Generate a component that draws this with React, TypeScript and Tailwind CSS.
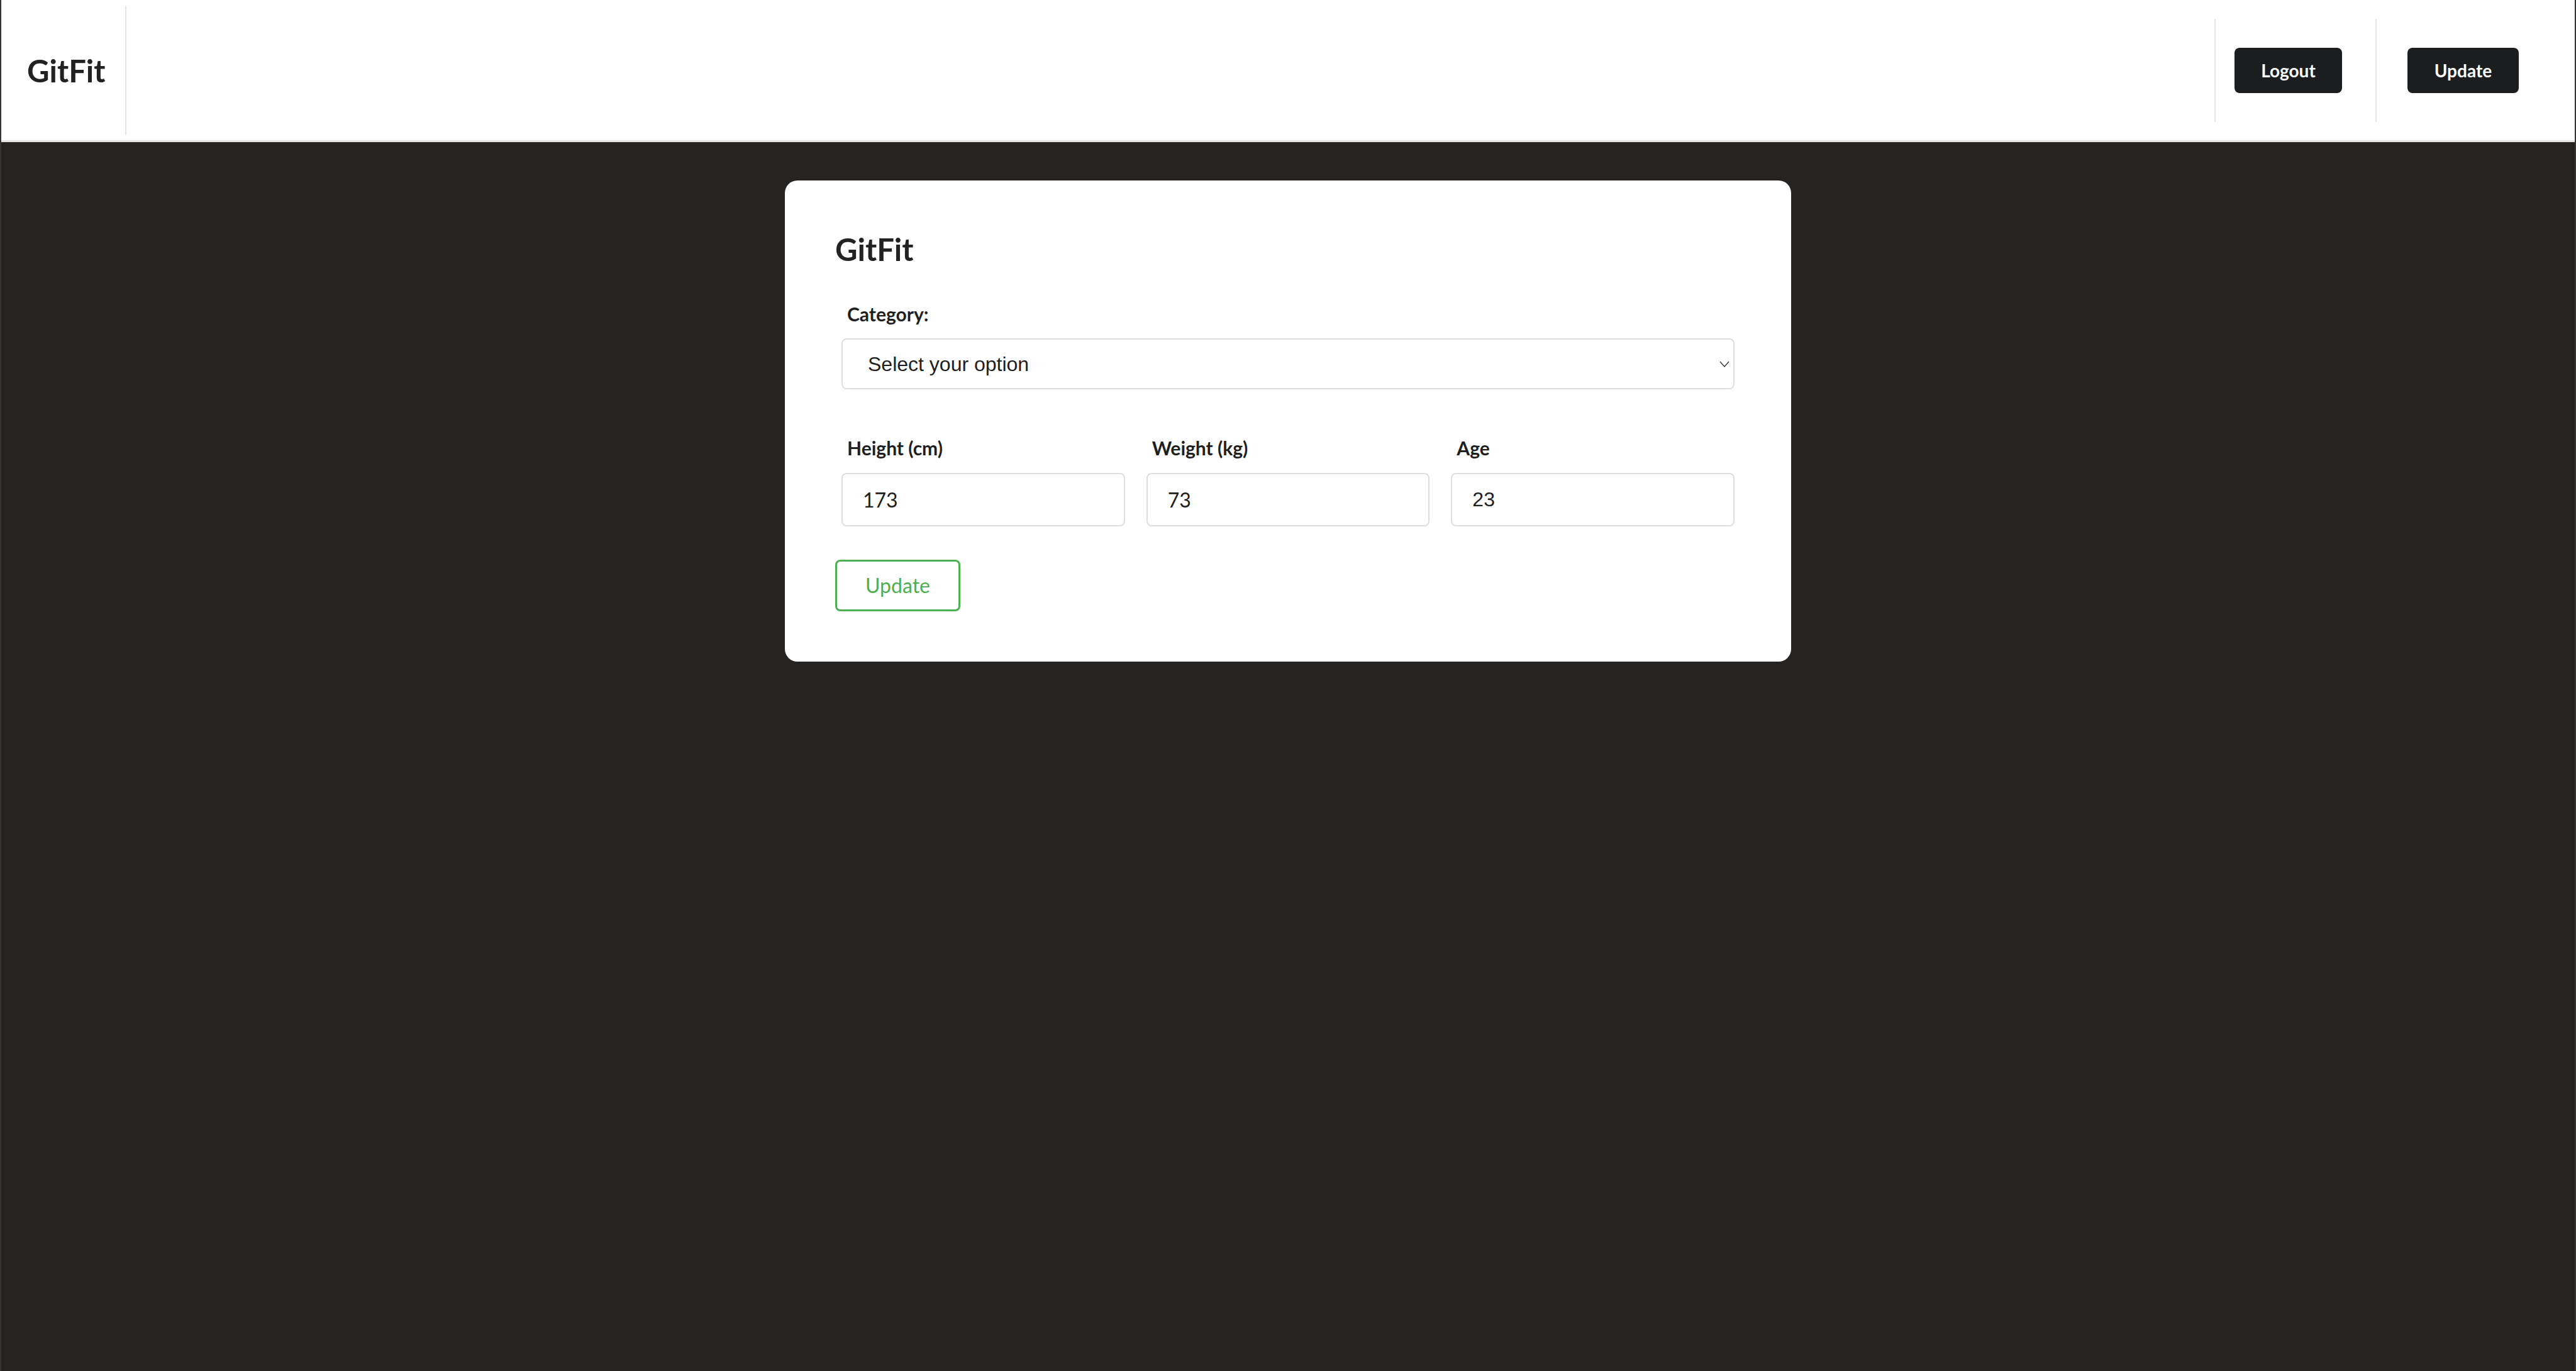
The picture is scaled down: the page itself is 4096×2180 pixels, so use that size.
import React from "react";

function Chevron() {
  return (
    <svg
      className="pointer-events-none absolute right-[8px] top-1/2 -translate-y-1/2"
      width="16"
      height="10"
      viewBox="0 0 16 10"
      fill="none"
    >
      <path d="M1 1 L8 9 L15 1" stroke="#333333" strokeWidth="1.4" />
    </svg>
  );
}

export default function App() {
  return (
    <div className="min-h-[2180px] w-full bg-[#252422] border-x-2 border-[#80808030] [font-family:Lato,sans-serif] text-[#1f1f1f]">
      {/* Header */}
      <header className="flex h-[226px] items-center bg-white border-b-[3px] border-[#e4e4e4]">
        <div className="flex h-[204px] w-[199px] items-center border-r-2 border-[#e6e6e6] pl-[41px]">
          <span className="text-[49px] font-bold leading-[58px] text-[#222222]">GitFit</span>
        </div>
        <div className="flex-1" />
        <div className="flex items-center pr-[89px]">
          <div className="h-[164px] w-[2px] bg-[#e6e6e6]" />
          <button className="ml-[30px] flex h-[72px] w-[171px] items-center justify-center rounded-[8px] bg-[#1c1d1f] text-[28px] font-bold leading-none text-white">
            Logout
          </button>
          <div className="ml-[53px] h-[164px] w-[2px] bg-[#e6e6e6]" />
          <button className="ml-[49px] flex h-[72px] w-[177px] items-center justify-center rounded-[8px] bg-[#1c1d1f] text-[28px] font-bold leading-none text-white">
            Update
          </button>
        </div>
      </header>

      {/* Card */}
      <main className="flex justify-center pt-[61px]">
        <div className="w-[1600px] rounded-[20px] bg-white px-[80px] pt-[80px] pb-[80px]">
          <h1 className="text-[49px] font-bold leading-[58px] text-[#222222]">GitFit</h1>

          <div className="mx-[10px] mt-[56px]">
            <label className="block pl-[9px] text-[30px] font-bold leading-[36px] text-[#1f1f1f]">
              Category:
            </label>
            <div className="relative mt-[21px]">
              <select
                defaultValue=""
                className="h-[81px] w-full appearance-none rounded-[8px] border-2 border-[#dedede] bg-white pl-[40px] text-[32px] text-[#1f1f1f] [font-family:'Liberation_Sans',Arial,sans-serif] outline-none"
              >
                <option value="">Select your option</option>
                <option value="bulk">Bulk</option>
                <option value="cut">Cut</option>
                <option value="maintain">Maintain</option>
              </select>
              <Chevron />
            </div>
          </div>

          <div className="mx-[10px] mt-[75px] grid grid-cols-3 gap-x-[34px]">
            <div>
              <label className="block pl-[9px] text-[30px] font-bold leading-[36px]">Height (cm)</label>
              <input
                defaultValue="173"
                className="mt-[22px] block h-[85px] w-full rounded-[8px] border-2 border-[#dedede] bg-white pl-[32px] text-[32px] text-[#1f1f1f] [font-family:Lato,sans-serif] outline-none"
              />
            </div>
            <div>
              <label className="block pl-[9px] text-[30px] font-bold leading-[36px]">Weight (kg)</label>
              <input
                defaultValue="73"
                className="mt-[22px] block h-[85px] w-full rounded-[8px] border-2 border-[#dedede] bg-white pl-[32px] text-[32px] text-[#1f1f1f] [font-family:Lato,sans-serif] outline-none"
              />
            </div>
            <div>
              <label className="block pl-[9px] text-[30px] font-bold leading-[36px]">Age</label>
              <input
                defaultValue="23"
                className="mt-[22px] block h-[85px] w-full rounded-[8px] border-2 border-[#dedede] bg-white pl-[32px] text-[32px] text-[#1f1f1f] [font-family:'Liberation_Sans',Arial,sans-serif] outline-none"
              />
            </div>
          </div>

          <button className="mt-[53px] flex h-[82px] w-[199px] items-center justify-center rounded-[8px] border-[3px] border-[#4caf50] bg-white text-[32px] leading-none text-[#4caf50]">
            Update
          </button>
        </div>
      </main>
    </div>
  );
}
